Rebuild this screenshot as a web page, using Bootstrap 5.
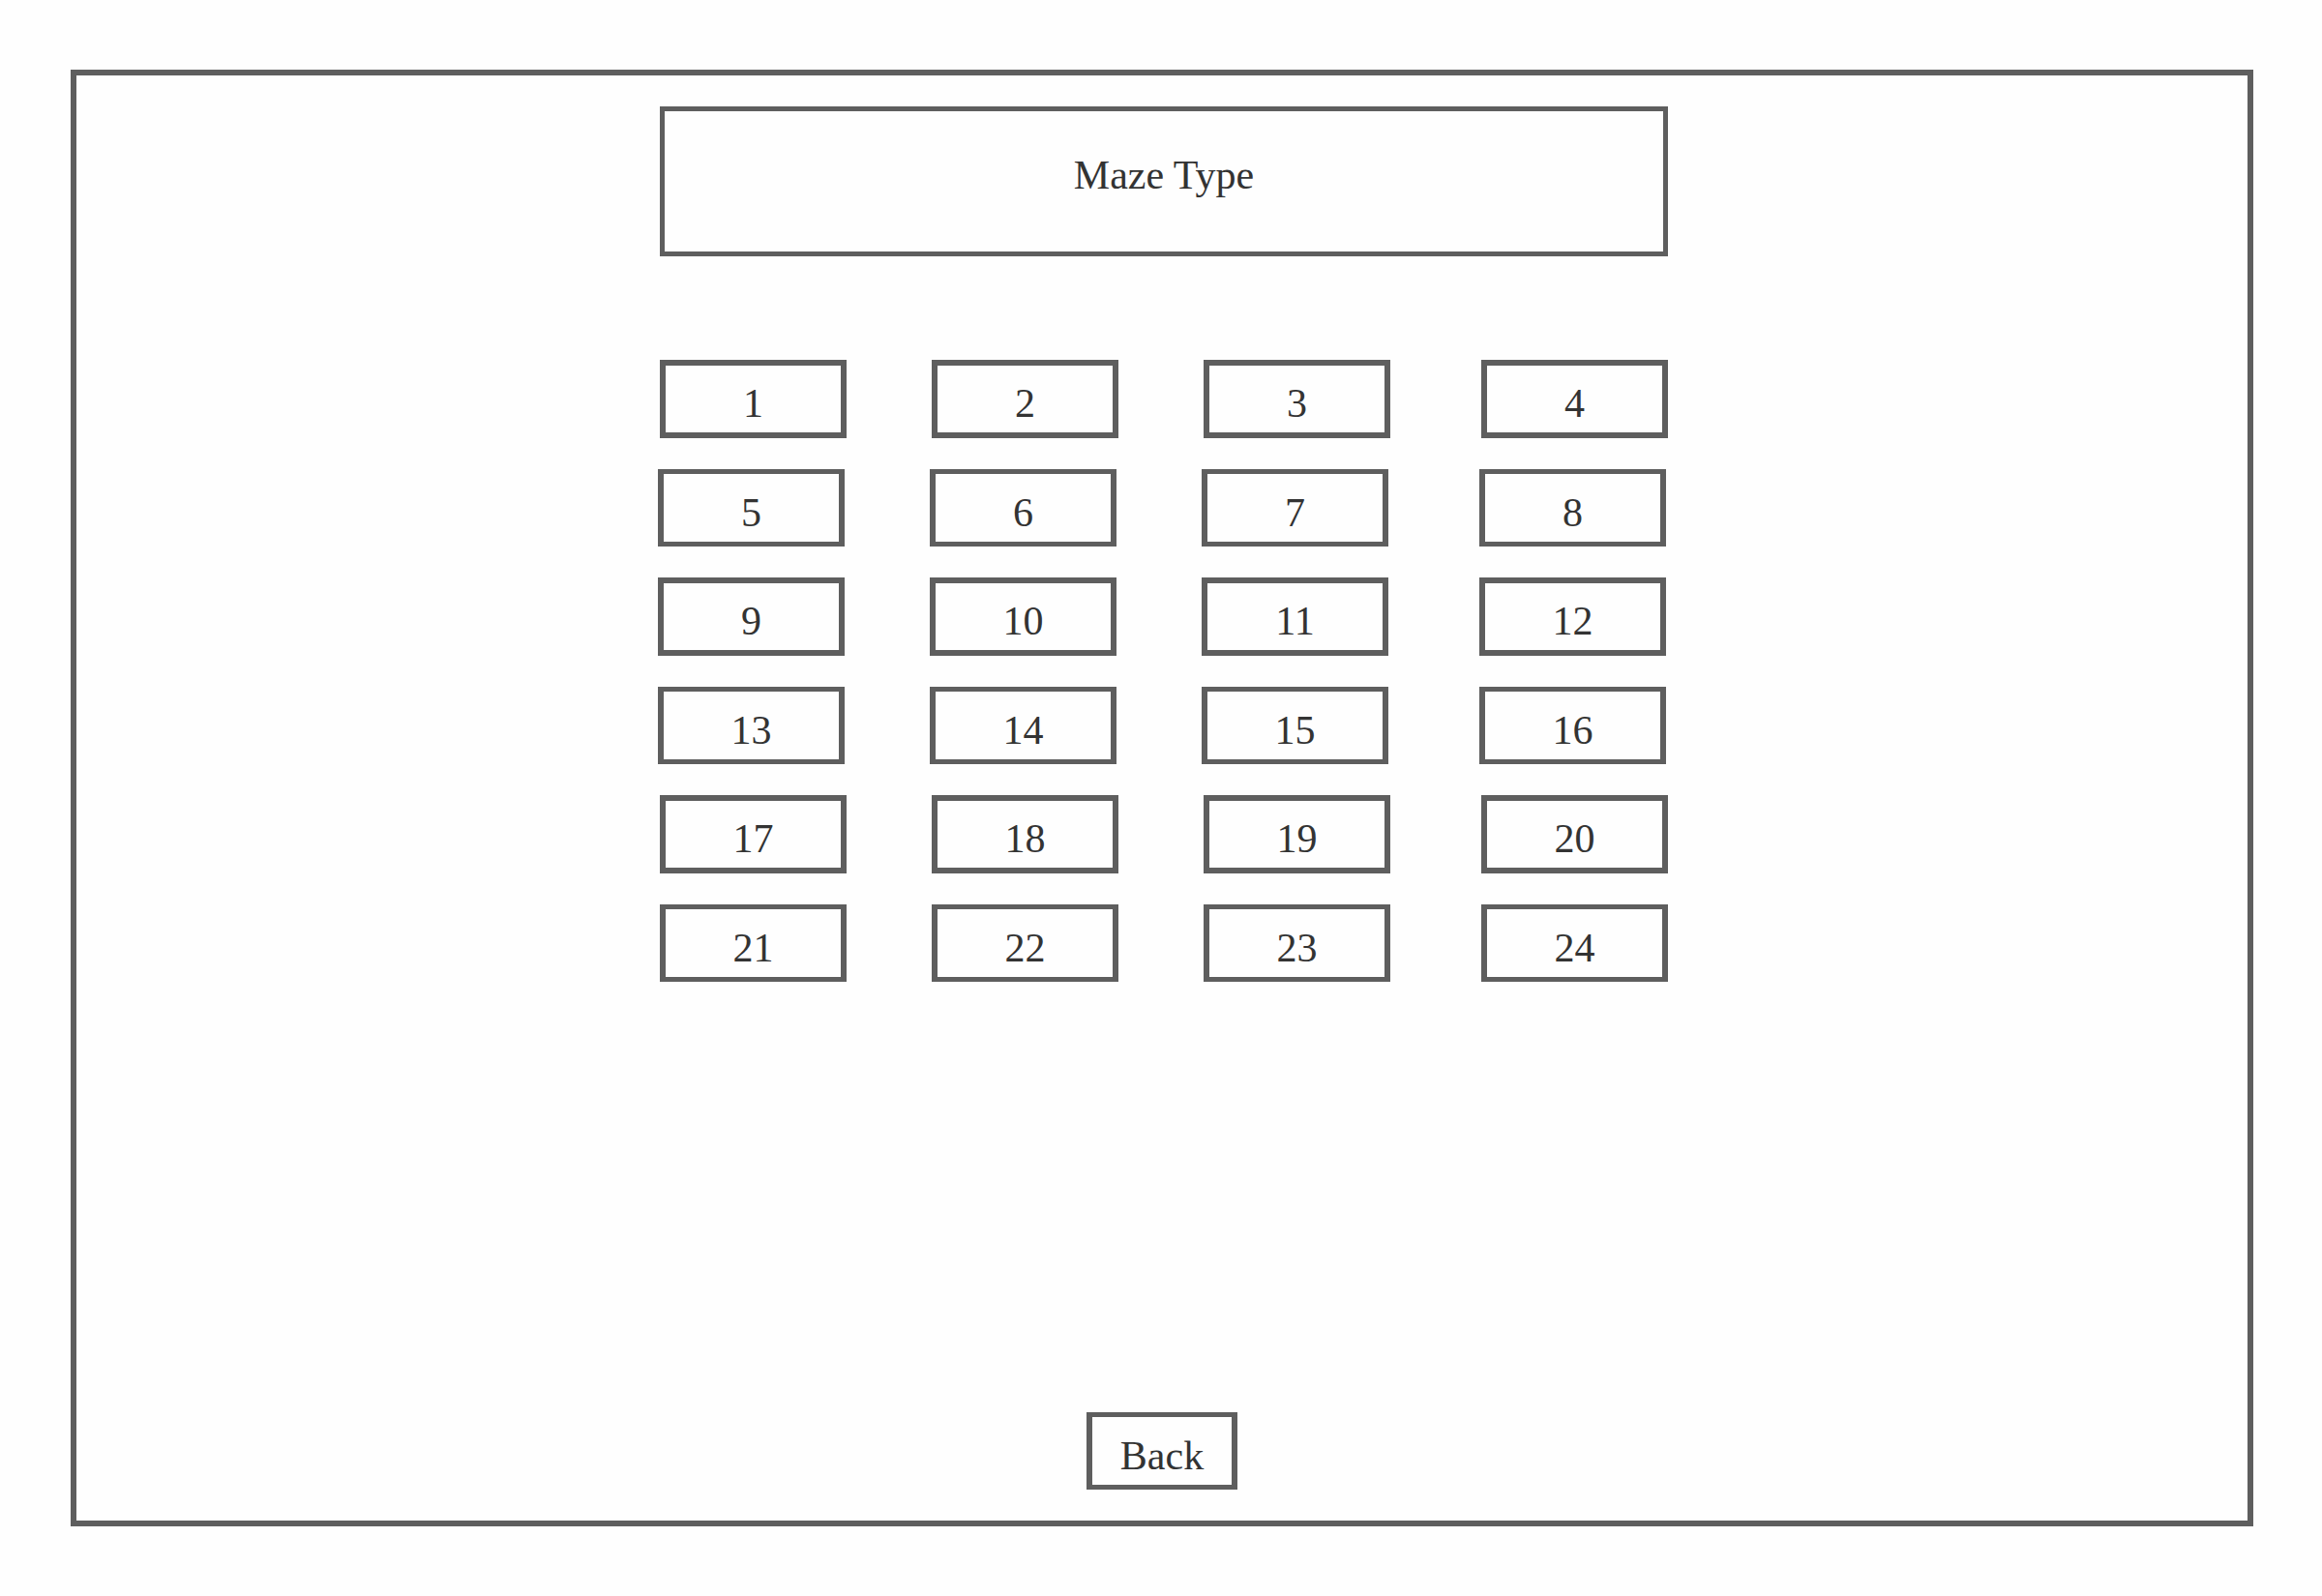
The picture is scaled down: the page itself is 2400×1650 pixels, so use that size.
<!DOCTYPE html>
<html lang="en">
<head>
<meta charset="utf-8">
<meta name="viewport" content="width=device-width, initial-scale=1">
<title>Maze Type</title>
<link href="https://cdn.jsdelivr.net/npm/bootstrap@5.3.0/dist/css/bootstrap.min.css" rel="stylesheet">
<style>
  body {
    padding: 72px 71px 72px 73px;
    background: #fefefe;
    color: #333;
    font-family: "Liberation Serif", serif;
    font-size: 42px;
    line-height: 48px;
  }
  .screen { border: 6px solid #5e5e5e; padding: 32px 16px; }
  .board { max-width: 1046px; }
  .title-box {
    margin-left: 4px;
    height: 155px;
    padding-bottom: 14px;
    border: 5px solid #5e5e5e;
    font-size: 42px;
    line-height: 48px;
  }
  .levels { margin-top: 107px; gap: 32px; }
  .level-row { gap: 88px; padding-left: 4px; }
  .level-row.shifted { padding: 0 2px; }
  .box-btn {
    --bs-btn-color: #333;
    --bs-btn-bg: transparent;
    --bs-btn-border-color: #5e5e5e;
    --bs-btn-border-width: 5px;
    --bs-btn-border-radius: 0;
    --bs-btn-font-size: 42px;
    --bs-btn-line-height: 48px;
    --bs-btn-hover-color: #333;
    --bs-btn-hover-bg: #eee;
    --bs-btn-hover-border-color: #5e5e5e;
    height: 80px;
    padding: 9px 0 0;
    border-left-width: 6px;
    border-right-width: 6px;
    font-family: inherit;
  }
  .level-row .box-btn { flex: 0 1 193px; min-width: 0; }
  .level-row:nth-child(odd) .box-btn {
    height: 81px;
    border-top-width: 6px;
    border-bottom-width: 6px;
  }
  .back-btn { width: 156px; }
</style>
<script src="https://cdn.jsdelivr.net/npm/bootstrap@5.3.0/dist/js/bootstrap.bundle.min.js" defer></script>
</head>
<body class="min-vh-100 d-flex flex-column">
<main class="screen flex-grow-1 d-flex flex-column align-items-center">
  <div class="board w-100">
    <h1 class="title-box d-flex align-items-center justify-content-center fw-normal mb-0">Maze Type</h1>
    <div class="levels d-flex flex-column">
      <div class="level-row d-flex">
        <button type="button" class="btn box-btn">1</button>
        <button type="button" class="btn box-btn">2</button>
        <button type="button" class="btn box-btn">3</button>
        <button type="button" class="btn box-btn ms-auto">4</button>
      </div>
      <div class="level-row shifted d-flex">
        <button type="button" class="btn box-btn">5</button>
        <button type="button" class="btn box-btn">6</button>
        <button type="button" class="btn box-btn">7</button>
        <button type="button" class="btn box-btn ms-auto">8</button>
      </div>
      <div class="level-row shifted d-flex">
        <button type="button" class="btn box-btn">9</button>
        <button type="button" class="btn box-btn">10</button>
        <button type="button" class="btn box-btn">11</button>
        <button type="button" class="btn box-btn ms-auto">12</button>
      </div>
      <div class="level-row shifted d-flex">
        <button type="button" class="btn box-btn">13</button>
        <button type="button" class="btn box-btn">14</button>
        <button type="button" class="btn box-btn">15</button>
        <button type="button" class="btn box-btn ms-auto">16</button>
      </div>
      <div class="level-row d-flex">
        <button type="button" class="btn box-btn">17</button>
        <button type="button" class="btn box-btn">18</button>
        <button type="button" class="btn box-btn">19</button>
        <button type="button" class="btn box-btn ms-auto">20</button>
      </div>
      <div class="level-row d-flex">
        <button type="button" class="btn box-btn">21</button>
        <button type="button" class="btn box-btn">22</button>
        <button type="button" class="btn box-btn">23</button>
        <button type="button" class="btn box-btn ms-auto">24</button>
      </div>
    </div>
  </div>
  <button type="button" class="btn box-btn back-btn mt-auto">Back</button>
</main>
</body>
</html>
